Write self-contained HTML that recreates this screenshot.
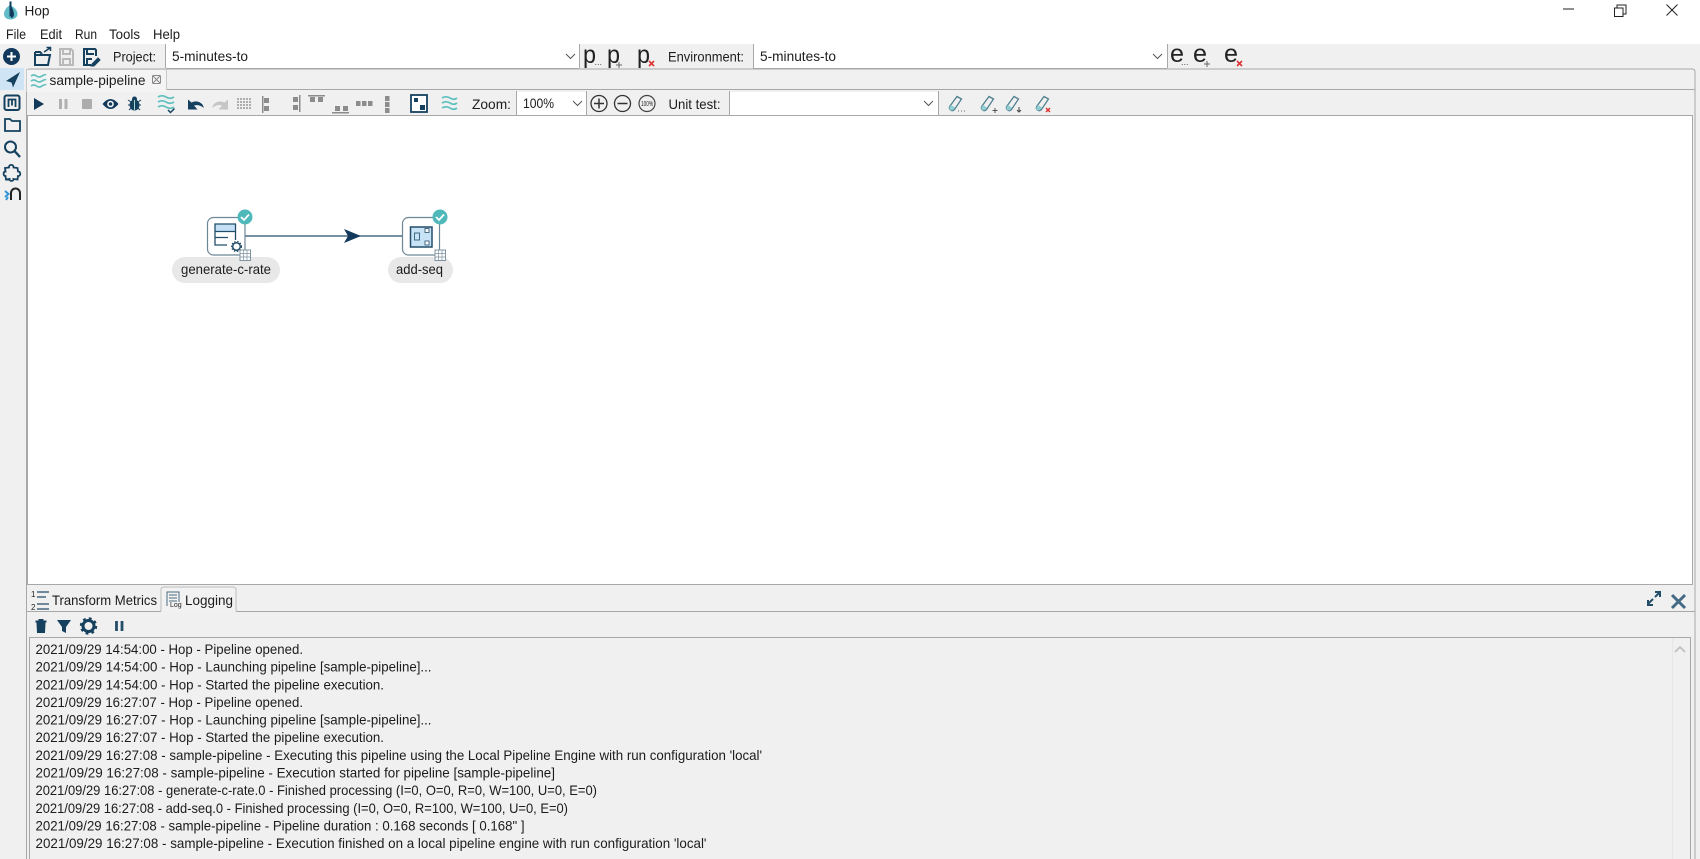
<!DOCTYPE html>
<html><head><meta charset="utf-8"><title>Hop</title>
<style>
html,body{margin:0;padding:0;background:#fff;width:1700px;height:859px;overflow:hidden}
svg{display:block;font-family:"Liberation Sans",sans-serif;filter:blur(.3px)}
text{fill:#1c1c1c;font-size:14px}
.big{font-size:25px;fill:#222}
.sub{font-size:12px;fill:#555}
</style></head><body>
<svg width="1700" height="859" viewBox="0 0 1700 859" xmlns="http://www.w3.org/2000/svg">
<rect x="0" y="44" width="1700" height="815" fill="#f0f0f0"/>
<!-- title -->
<path d="M10 5C7 7 4 10 4 14c0 3.500 3 5.500 6.500 5.500s7-2 7-5.500c0-4-3.500-7-7.500-9z" fill="#62bcc8"/>
<path d="M10.500 1.500v15" stroke="#123a5a" stroke-width="2"/><path d="M11 6c2 3 3 6 3 8.500s-2 3.500-3 3.500z" fill="#123a5a"/>
<text x="24.500" y="15.500" textLength="25" lengthAdjust="spacingAndGlyphs">Hop</text>
<path d="M1563 9h11" stroke="#222" stroke-width="1"/>
<path d="M1617 8V5h9v9h-3" fill="none" stroke="#222"/><rect x="1614.500" y="8" width="8.500" height="8.500" fill="none" stroke="#222"/>
<path d="M1666.500 4.500l11 11M1677.500 4.500l-11 11" stroke="#222"/>
<!-- menu -->
<text x="6" y="39" textLength="20" lengthAdjust="spacingAndGlyphs">File</text>
<text x="40" y="39" textLength="22" lengthAdjust="spacingAndGlyphs">Edit</text>
<text x="75" y="39" textLength="22" lengthAdjust="spacingAndGlyphs">Run</text>
<text x="109" y="39" textLength="31" lengthAdjust="spacingAndGlyphs">Tools</text>
<text x="153" y="39" textLength="27" lengthAdjust="spacingAndGlyphs">Help</text>
<!-- top toolbar -->
<circle cx="11.500" cy="56.500" r="8.500" fill="#12395c"/><path d="M7 56.500h9M11.500 52v9" stroke="#fff" stroke-width="2"/>
<g fill="none" stroke="#15415f" stroke-width="2">
<path d="M35 52v13h13l2-10H36M35 52h5l2 2"/><path d="M44 52l6-4M46.500 47.500h4V51" stroke-width="1.500"/>
</g>
<g fill="none" stroke="#b9b9b9" stroke-width="2"><path d="M60 49h11l2 2v14H60z"/><path d="M63 49v5h7v-5M63 65v-6h7v6"/></g>
<g fill="none" stroke="#15415f" stroke-width="2"><path d="M96 56v-6l-1-1H84v16h7"/><path d="M87 49v5h7M87 65v-6h5"/><path d="M92 64l6-6 2 2-6 6-3 0z" fill="#15415f" stroke-width="1"/></g>
<text x="113" y="61.500" textLength="43" lengthAdjust="spacingAndGlyphs">Project:</text>
<rect x="166" y="44" width="413" height="24" fill="#fff"/>
<path d="M165.500 44v24M579.500 44v24M166 68.500h413" stroke="#a8a8a8"/>
<text x="172" y="61" textLength="76" lengthAdjust="spacingAndGlyphs">5-minutes-to</text>
<path d="M566 54l4.500 4.500 4.500-4.500" fill="none" stroke="#555"/>
<text class="big" x="583" y="63" textLength="13" lengthAdjust="spacingAndGlyphs">p</text><text class="sub" x="594.500" y="65" style="font-size:9px">...</text>
<text class="big" x="607" y="63" textLength="13" lengthAdjust="spacingAndGlyphs">p</text><path d="M619 62v6M616 65h6" stroke="#666"/>
<text class="big" x="637" y="63" textLength="13" lengthAdjust="spacingAndGlyphs">p</text><path d="M649 61l5 5M654 61l-5 5" stroke="#d33" stroke-width="1.600"/>
<text x="668" y="61.500" textLength="76" lengthAdjust="spacingAndGlyphs">Environment:</text>
<rect x="753" y="44" width="414" height="24" fill="#fff"/>
<path d="M753.500 44v24M1167.500 44v24M753 68.500h414" stroke="#a8a8a8"/>
<text x="760" y="61" textLength="76" lengthAdjust="spacingAndGlyphs">5-minutes-to</text>
<path d="M1153 54l4.500 4.500 4.500-4.500" fill="none" stroke="#555"/>
<text class="big" x="1170" y="62" textLength="14" lengthAdjust="spacingAndGlyphs">e</text><text class="sub" x="1181" y="65" style="font-size:9px">...</text>
<text class="big" x="1193" y="62" textLength="14" lengthAdjust="spacingAndGlyphs">e</text><path d="M1207 61v6M1204 64h6" stroke="#666"/>
<text class="big" x="1224" y="62" textLength="14" lengthAdjust="spacingAndGlyphs">e</text><path d="M1237 61l5 5M1242 61l-5 5" stroke="#d33" stroke-width="1.600"/>
<!-- sidebar -->
<rect x="0" y="68" width="24" height="22" fill="#cfe5f6"/>
<path d="M20 72L6 81l5.500 1.500 1.500 5z" fill="#15415f"/>
<rect x="4.500" y="95.500" width="15" height="14.500" rx="2" fill="none" stroke="#15415f" stroke-width="2"/>
<path d="M8.500 107v-7.500h7V107M12 99.500v6" fill="none" stroke="#15415f" stroke-width="1.800"/>
<path d="M5 131V119h5l2 2h8v10z" fill="none" stroke="#15415f" stroke-width="1.800"/>
<circle cx="10.500" cy="147" r="5.500" fill="none" stroke="#15415f" stroke-width="2"/><path d="M14.500 151l5.500 6" stroke="#15415f" stroke-width="2.400"/>
<path d="M9 167.500c-.5-3.500 5-3.500 4.500 0l4 .5.500 3.500c3-.5 3 5 0 4.500l-.5 3.500-4-.5c.5 2.500-4.500 2.500-4 0l-3.500.5-.5-3.500c-2.500 .5-2.500-5 0-4.500l-.5-3.500z" fill="none" stroke="#15415f" stroke-width="1.800"/>
<path d="M11 200v-7a4.500 4.500 0 0 1 9 0v7" fill="none" stroke="#222" stroke-width="2"/>
<path d="M5 191l3.500 3-3.500 3M6 200l2-3" fill="none" stroke="#2f95d6" stroke-width="2"/>
<!-- main frame -->
<path d="M26.500 115V72q0-3 3-3H1692q3 0 3 3V859" fill="none" stroke="#a8a8a8"/>
<path d="M26.500 115V859" stroke="#a8a8a8"/>
<path d="M167 89.500H1695" stroke="#a8a8a8"/>
<path d="M26 69h141v23H26z" fill="#f4f4f4"/><path d="M26.500 92V69.500H166.500V90" fill="none" stroke="#c8c8c8"/>
<g fill="none" stroke="#62c2c0" stroke-width="1.700">
<path d="M31 76q3-2 5.500 0t5.500 0 4-1"/><path d="M31 81q3-2 5.500 0t5.500 0 4-1"/><path d="M31 86q3-2 5.500 0t5.500 0 4-1"/></g>
<text x="49.500" y="85" textLength="96" lengthAdjust="spacingAndGlyphs">sample-pipeline</text>
<g fill="none" stroke="#888"><rect x="152.500" y="75.500" width="8" height="8" rx="1"/><path d="M153 76l7 7M160 76l-7 7"/></g>
<!-- row toolbar -->
<path d="M34 98l10 6-10 6z" fill="#12395c"/>
<path d="M60.500 99v10M66 99v10" stroke="#b0b0b0" stroke-width="3"/>
<rect x="82" y="99" width="10" height="10" rx="1" fill="#adadad"/>
<path d="M102.500 104q8-10 16 0q-8 10-16 0z" fill="#12395c"/><circle cx="110.500" cy="104" r="3.300" fill="#fff"/><circle cx="110.500" cy="104" r="1.800" fill="#12395c"/>
<ellipse cx="134.500" cy="105" rx="5" ry="5.500" fill="#15415f"/><circle cx="134.500" cy="99" r="2.500" fill="#15415f"/><path d="M128 100l3 2M141 100l-3 2M128 105h3M141 105h-3M129 110l2-2M140 110l-2-2" stroke="#15415f"/><path d="M134.500 100v10" stroke="#cfe" stroke-width=".8"/>
<g fill="none" stroke="#62c2c0" stroke-width="1.800"><path d="M158 97q4-2.500 8 0t8 0"/><path d="M158 102q4-2.500 8 0t8 0"/><path d="M158 107q4-2.500 8 0t8 0"/></g>
<path d="M168 110l2.500 2.500 4-4" fill="none" stroke="#15415f" stroke-width="1.500"/>
<path d="M188 109.500v-10l3.500 3q6-3 11 2l1.500 3.500q-5-4-10-2.500l3.500 4z" fill="#15415f"/>
<path d="M228 109.500v-10l-3.500 3q-6-3-11 2l-1.500 3.500q5-4 10-2.500l-3.500 4z" fill="#c6c6c6"/>
<g fill="#adadad"><path d="M237 98h2v2h-2zM240 98h2v2h-2zM243 98h2v2h-2zM246 98h2v2h-2zM249 98h2v2h-2zM237 101h2v2h-2zM240 101h2v2h-2zM243 101h2v2h-2zM246 101h2v2h-2zM249 101h2v2h-2zM237 104h2v2h-2zM240 104h2v2h-2zM243 104h2v2h-2zM246 104h2v2h-2zM249 104h2v2h-2zM237 107h2v2h-2zM240 107h2v2h-2zM243 107h2v2h-2zM246 107h2v2h-2zM249 107h2v2h-2z"/></g>
<g fill="#8c8c8c">
<rect x="262" y="96" width="1.500" height="17"/><rect x="264" y="98" width="5" height="5"/><rect x="264" y="106" width="5" height="5"/>
<rect x="299" y="95" width="1.500" height="17"/><rect x="293" y="97" width="5" height="5"/><rect x="293" y="105" width="5" height="5"/>
<rect x="308" y="95" width="17" height="1.500"/><rect x="310" y="97" width="5" height="5"/><rect x="318" y="97" width="5" height="5"/>
<rect x="332" y="112" width="17" height="1.500"/><rect x="335" y="106" width="5" height="5"/><rect x="343" y="106" width="5" height="5"/>
<rect x="356" y="101" width="4.500" height="5"/><rect x="362" y="101" width="4.500" height="5"/><rect x="368" y="101" width="4.500" height="5"/>
<rect x="385" y="96" width="4.500" height="5"/><rect x="385" y="102" width="4.500" height="5"/><rect x="385" y="108" width="4.500" height="5"/>
</g>
<rect x="411" y="95" width="16" height="17" fill="#fff" stroke="#15415f" stroke-width="1.800"/>
<rect x="414" y="98" width="4" height="4" fill="#15415f"/><rect x="420" y="105" width="5" height="5" fill="#15415f"/>
<g fill="none" stroke="#62c2c0" stroke-width="1.800"><path d="M442 98q4-2.500 8 0t7 0"/><path d="M442 103q4-2.500 8 0t7 0"/><path d="M442 108q4-2.500 8 0t7 0"/></g>
<text x="472" y="109" textLength="39" lengthAdjust="spacingAndGlyphs">Zoom:</text>
<rect x="517" y="92" width="69" height="23" fill="#fff"/><path d="M516.500 91v24M586.500 91v24" stroke="#a8a8a8"/>
<text x="523" y="108" textLength="31" lengthAdjust="spacingAndGlyphs">100%</text>
<path d="M573 101l4.500 4.500 4.500-4.500" fill="none" stroke="#555"/>
<circle cx="599" cy="103.500" r="8" fill="none" stroke="#333" stroke-width="1.300"/><path d="M594 103.500h10M599 98.500v10" stroke="#333" stroke-width="1.500"/>
<circle cx="622.500" cy="103.500" r="8" fill="none" stroke="#333" stroke-width="1.300"/><path d="M617.500 103.500h10" stroke="#333" stroke-width="1.500"/>
<circle cx="647" cy="103.500" r="8" fill="none" stroke="#444" stroke-width="1.200"/><text x="641" y="106" style="font-size:7px" textLength="12" lengthAdjust="spacingAndGlyphs">100%</text>
<text x="668.500" y="109" textLength="52" lengthAdjust="spacingAndGlyphs">Unit test:</text>
<rect x="730" y="92" width="208" height="23" fill="#fff"/><path d="M729.500 91v24M938.500 91v24" stroke="#a8a8a8"/>
<path d="M924 101l4.500 4.500 4.500-4.500" fill="none" stroke="#555"/>
<g fill="none" stroke="#4f7f8e" stroke-width="1.300">
<path d="M957 96.500l4.500 2.500-7 10.500q-2 2-4 .5t-.5-4z"/><path d="M989 96.500l4.500 2.500-7 10.500q-2 2-4 .5t-.5-4z"/><path d="M1014 96.500l4.500 2.500-7 10.500q-2 2-4 .5t-.5-4z"/><path d="M1044 96.500l4.500 2.500-7 10.500q-2 2-4 .5t-.5-4z"/>
</g>
<g fill="#8fcdd2"><path d="M951 105l4 2.500-2 2.500q-2 1-3 0t-.5-3zM983 105l4 2.500-2 2.500q-2 1-3 0t-.5-3zM1008 105l4 2.500-2 2.500q-2 1-3 0t-.5-3zM1038 105l4 2.500-2 2.500q-2 1-3 0t-.5-3z"/></g>
<path d="M958 111h1M961 111h1M964 111h1" stroke="#666"/>
<path d="M995 108v5M992.500 110.500h5" stroke="#555"/><path d="M1019 107v5M1017 110l2 2 2-2" fill="none" stroke="#444"/>
<path d="M1046 108l4 4M1050 108l-4 4" stroke="#d33" stroke-width="1.500"/>
<!-- canvas -->
<rect x="27.500" y="115.500" width="1665" height="469" fill="#fff" stroke="#a8a8a8"/>
<path d="M245 236H402" stroke="#234d68" stroke-width="1.300"/>
<path d="M344 229l17 7-17 7 4-7z" fill="#12395c"/>
<rect x="172" y="257" width="108" height="26" rx="13" fill="#e8e8e8"/><rect x="388" y="257" width="65" height="26" rx="13" fill="#e8e8e8"/>
<text x="181" y="274" textLength="90" lengthAdjust="spacingAndGlyphs">generate-c-rate</text>
<text x="396" y="274" textLength="47" lengthAdjust="spacingAndGlyphs">add-seq</text>
<rect x="207.500" y="217.500" width="37.500" height="37.500" rx="6" fill="#fff" stroke="#6d8796" stroke-width="1.200"/>
<rect x="215" y="224" width="21" height="7" fill="#c3e0f5"/>
<path d="M235.500 240V224H215v21h12M215 231.500h21M215 237.500h13" fill="none" stroke="#234d68" stroke-width="1.300"/>
<circle cx="236.500" cy="246.500" r="6.500" fill="#fff"/><circle cx="236.500" cy="246.500" r="3.800" fill="none" stroke="#234d68" stroke-width="1.500"/><circle cx="236.500" cy="246.500" r="5" fill="none" stroke="#234d68" stroke-width="1.100" stroke-dasharray="1.500 1.500"/>
<rect x="402.500" y="217.500" width="37" height="37.500" rx="6" fill="#fff" stroke="#6d8796" stroke-width="1.200"/>
<rect x="410.500" y="227" width="21.500" height="20" fill="#c9e3f6" stroke="#234d68" stroke-width="1.500"/>
<rect x="414.500" y="233" width="5" height="7" fill="none" stroke="#3a6a86"/><rect x="425" y="228.500" width="4" height="4" fill="#fff" stroke="#234d68" stroke-width=".8"/><rect x="425" y="241" width="4" height="4" fill="#fff" stroke="#234d68" stroke-width=".8"/>
<g fill="#fff" stroke="#7d93a1"><rect x="240" y="250" width="10.500" height="10.500"/><path d="M240 253.500h10.500M240 257h10.500M243.500 250v10.500M247 250v10.500" stroke-width=".7"/>
<rect x="435" y="250" width="10.500" height="10.500"/><path d="M435 253.500h10.500M435 257h10.500M438.500 250v10.500M442 250v10.500" stroke-width=".7"/></g>
<circle cx="245" cy="217" r="7.500" fill="#4fb8bb"/><path d="M241 217l3 3 5-5.500" fill="none" stroke="#fff" stroke-width="1.800"/>
<circle cx="440" cy="217" r="7.500" fill="#4fb8bb"/><path d="M436 217l3 3 5-5.500" fill="none" stroke="#fff" stroke-width="1.800"/>
<!-- bottom tabs -->
<path d="M27 611.500H161M236 611.500H1695" stroke="#a8a8a8"/>
<path d="M161 611V590q0-3 3-3h69q3 0 3 3v21" fill="#f2f2f2" stroke="#bdbdbd"/>
<text x="31" y="597" style="font-size:8px">1</text><text x="31" y="610" style="font-size:8px">2</text>
<path d="M37 592h12M37 597h9M37 604h12M37 609h12" stroke="#234d68" stroke-width="1.300"/>
<text x="52" y="605" textLength="105" lengthAdjust="spacingAndGlyphs">Transform Metrics</text>
<path d="M167 606v-14h12v10M169 595h8M169 598h8M169 601h8" fill="none" stroke="#4a6c83"/><text x="170" y="607" style="font-size:7px" fill="#4a6c83">Log</text>
<text x="185" y="605" textLength="48" lengthAdjust="spacingAndGlyphs">Logging</text>
<path d="M1648 604l5-5M1648 600v5h5M1655 597l5-5M1655 592h5v5" fill="none" stroke="#234d68" stroke-width="2"/>
<path d="M1672 595l13 13M1685 595l-13 13" stroke="#456a85" stroke-width="3"/>
<!-- log toolbar -->
<path d="M36 621h10v1H36zM39 619.500h4v1.500h-4zM37 623h8l-.5 9.500h-7z" fill="#15415f" stroke="#15415f"/>
<path d="M57 620h14l-5 7v6l-4-2v-4z" fill="#15415f"/>
<circle cx="88.500" cy="626" r="5.500" fill="none" stroke="#15415f" stroke-width="3"/><circle cx="88.500" cy="626" r="7.500" fill="none" stroke="#15415f" stroke-width="2.400" stroke-dasharray="2.800 3.100"/>
<path d="M116.500 621v10M122 621v10" stroke="#234d68" stroke-width="2.800"/>
<!-- log box -->
<path d="M29.500 859V637.500H1690.500V859" fill="none" stroke="#a8a8a8"/>
<path d="M1672.500 638V859" stroke="#e6e6e6"/>
<path d="M1675 652l5-5 5 5" fill="none" stroke="#c4c4c4" stroke-width="2"/>
<text x="35.500" y="654" textLength="267.500" lengthAdjust="spacingAndGlyphs">2021/09/29 14:54:00 - Hop - Pipeline opened.</text>
<text x="35.500" y="671.600" textLength="396" lengthAdjust="spacingAndGlyphs">2021/09/29 14:54:00 - Hop - Launching pipeline [sample-pipeline]...</text>
<text x="35.500" y="689.300" textLength="348.500" lengthAdjust="spacingAndGlyphs">2021/09/29 14:54:00 - Hop - Started the pipeline execution.</text>
<text x="35.500" y="706.900" textLength="267.500" lengthAdjust="spacingAndGlyphs">2021/09/29 16:27:07 - Hop - Pipeline opened.</text>
<text x="35.500" y="724.600" textLength="396" lengthAdjust="spacingAndGlyphs">2021/09/29 16:27:07 - Hop - Launching pipeline [sample-pipeline]...</text>
<text x="35.500" y="742.200" textLength="348.500" lengthAdjust="spacingAndGlyphs">2021/09/29 16:27:07 - Hop - Started the pipeline execution.</text>
<text x="35.500" y="759.800" textLength="726.500" lengthAdjust="spacingAndGlyphs">2021/09/29 16:27:08 - sample-pipeline - Executing this pipeline using the Local Pipeline Engine with run configuration 'local'</text>
<text x="35.500" y="777.500" textLength="519.500" lengthAdjust="spacingAndGlyphs">2021/09/29 16:27:08 - sample-pipeline - Execution started for pipeline [sample-pipeline]</text>
<text x="35.500" y="795.100" textLength="561.500" lengthAdjust="spacingAndGlyphs">2021/09/29 16:27:08 - generate-c-rate.0 - Finished processing (I=0, O=0, R=0, W=100, U=0, E=0)</text>
<text x="35.500" y="812.800" textLength="532.500" lengthAdjust="spacingAndGlyphs">2021/09/29 16:27:08 - add-seq.0 - Finished processing (I=0, O=0, R=100, W=100, U=0, E=0)</text>
<text x="35.500" y="830.400" textLength="489" lengthAdjust="spacingAndGlyphs">2021/09/29 16:27:08 - sample-pipeline - Pipeline duration : 0.168 seconds [  0.168" ]</text>
<text x="35.500" y="848" textLength="671" lengthAdjust="spacingAndGlyphs">2021/09/29 16:27:08 - sample-pipeline - Execution finished on a local pipeline engine with run configuration 'local'</text>
</svg>
</body></html>
